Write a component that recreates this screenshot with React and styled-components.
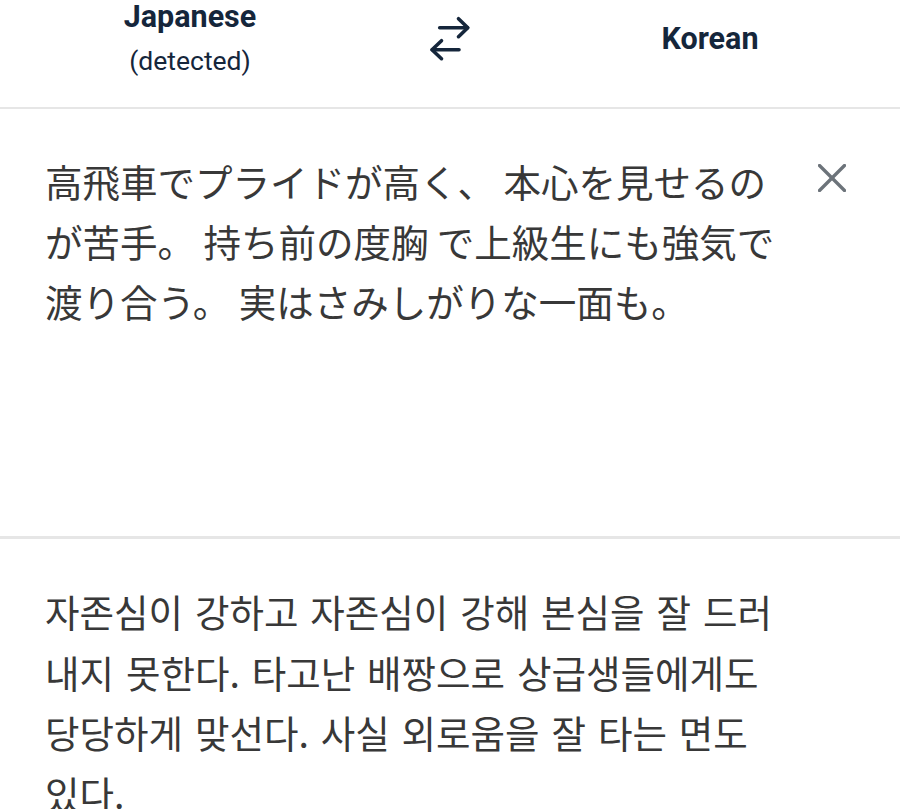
import React from "react";
import styled, { createGlobalStyle } from "styled-components";

const Global = createGlobalStyle`
  html, body { margin: 0; padding: 0; background: #ffffff; }
  body { font-family: Roboto, "Noto Sans", sans-serif; }
  * { box-sizing: border-box; }
`;

const Page = styled.div`
  width: 900px;
  min-height: 809px;
  background: #fff;
  overflow: hidden;
`;

const Header = styled.header`
  display: grid;
  grid-template-columns: 1fr 140px 1fr;
  align-items: center;
  height: 78px;
  margin-bottom: 29px;
  color: #15263b;
`;

const LangBlock = styled.div`
  display: flex;
  flex-direction: column;
  align-items: center;
`;

const LangName = styled.div`
  font-family: Roboto, sans-serif;
  font-weight: 700;
  font-size: 30.5px;
  line-height: 30px;
`;

const Detected = styled.div`
  font-family: Roboto, sans-serif;
  font-weight: 400;
  font-size: 26.5px;
  line-height: 30px;
  margin-top: 14px;
`;

const SwapButton = styled.div`
  display: flex;
  justify-content: center;
  align-items: center;
`;

const Divider = styled.div`
  height: ${(p) => p.$h}px;
  background: #e6e6e6;
`;

const SourcePane = styled.section`
  display: flex;
  align-items: flex-start;
  min-height: 427px;
  padding: 42px 0 0 45px;
`;

const SourceText = styled.p`
  margin: 0;
  width: 740px;
  font-family: "Noto Sans CJK JP", sans-serif;
  font-size: 37.5px;
  line-height: 60px;
  color: #383838;
`;

const ClearButton = styled.div`
  margin-left: 33px;
  margin-top: 13px;
  width: 28px;
  height: 28px;
  display: flex;
`;

const TargetPane = styled.section`
  padding: 42px 0 0 45px;
`;

const TargetText = styled.p`
  margin: 0;
  width: 735px;
  font-family: "Noto Sans CJK KR", sans-serif;
  font-size: 37.5px;
  line-height: 60.5px;
  word-spacing: 3.5px;
  word-break: break-all;
  color: #383838;
`;

const SwapIcon = () => (
  <svg width="46" height="50" viewBox="0 0 46 50" fill="none" stroke="#15263b" strokeWidth="3.6" strokeLinecap="round" strokeLinejoin="round">
    <path d="M12.7 13.7H40.5" />
    <path d="M31.5 4.7L40.8 13.7L31.5 22.7" />
    <path d="M5.2 35.7H32" />
    <path d="M14.5 26.7L5 35.7L14.5 44.7" />
  </svg>
);

const CloseIcon = () => (
  <svg width="28" height="28" viewBox="0 0 28 28" fill="none" stroke="#6c737a" strokeWidth="3.3" strokeLinecap="round">
    <path d="M1.5 1.5L26.5 26.5" />
    <path d="M26.5 1.5L1.5 26.5" />
  </svg>
);

export default function App() {
  return (
    <Page>
      <Global />
      <Header>
        <LangBlock>
          <LangName>Japanese</LangName>
          <Detected>(detected)</Detected>
        </LangBlock>
        <SwapButton>
          <SwapIcon />
        </SwapButton>
        <LangBlock>
          <LangName>Korean</LangName>
        </LangBlock>
      </Header>
      <Divider $h={2} />
      <SourcePane>
        <SourceText>
          高飛車でプライドが高く、 本心を見せるのが苦手。 持ち前の度胸 で上級生にも強気で渡り合う。 実はさみしがりな一面も。
        </SourceText>
        <ClearButton>
          <CloseIcon />
        </ClearButton>
      </SourcePane>
      <Divider $h={3} />
      <TargetPane>
        <TargetText>
          자존심이 강하고 자존심이 강해 본심을 잘 드러내지 못한다. 타고난 배짱으로 상급생들에게도 당당하게 맞선다. 사실 외로움을 잘 타는 면도 있다.
        </TargetText>
      </TargetPane>
    </Page>
  );
}
